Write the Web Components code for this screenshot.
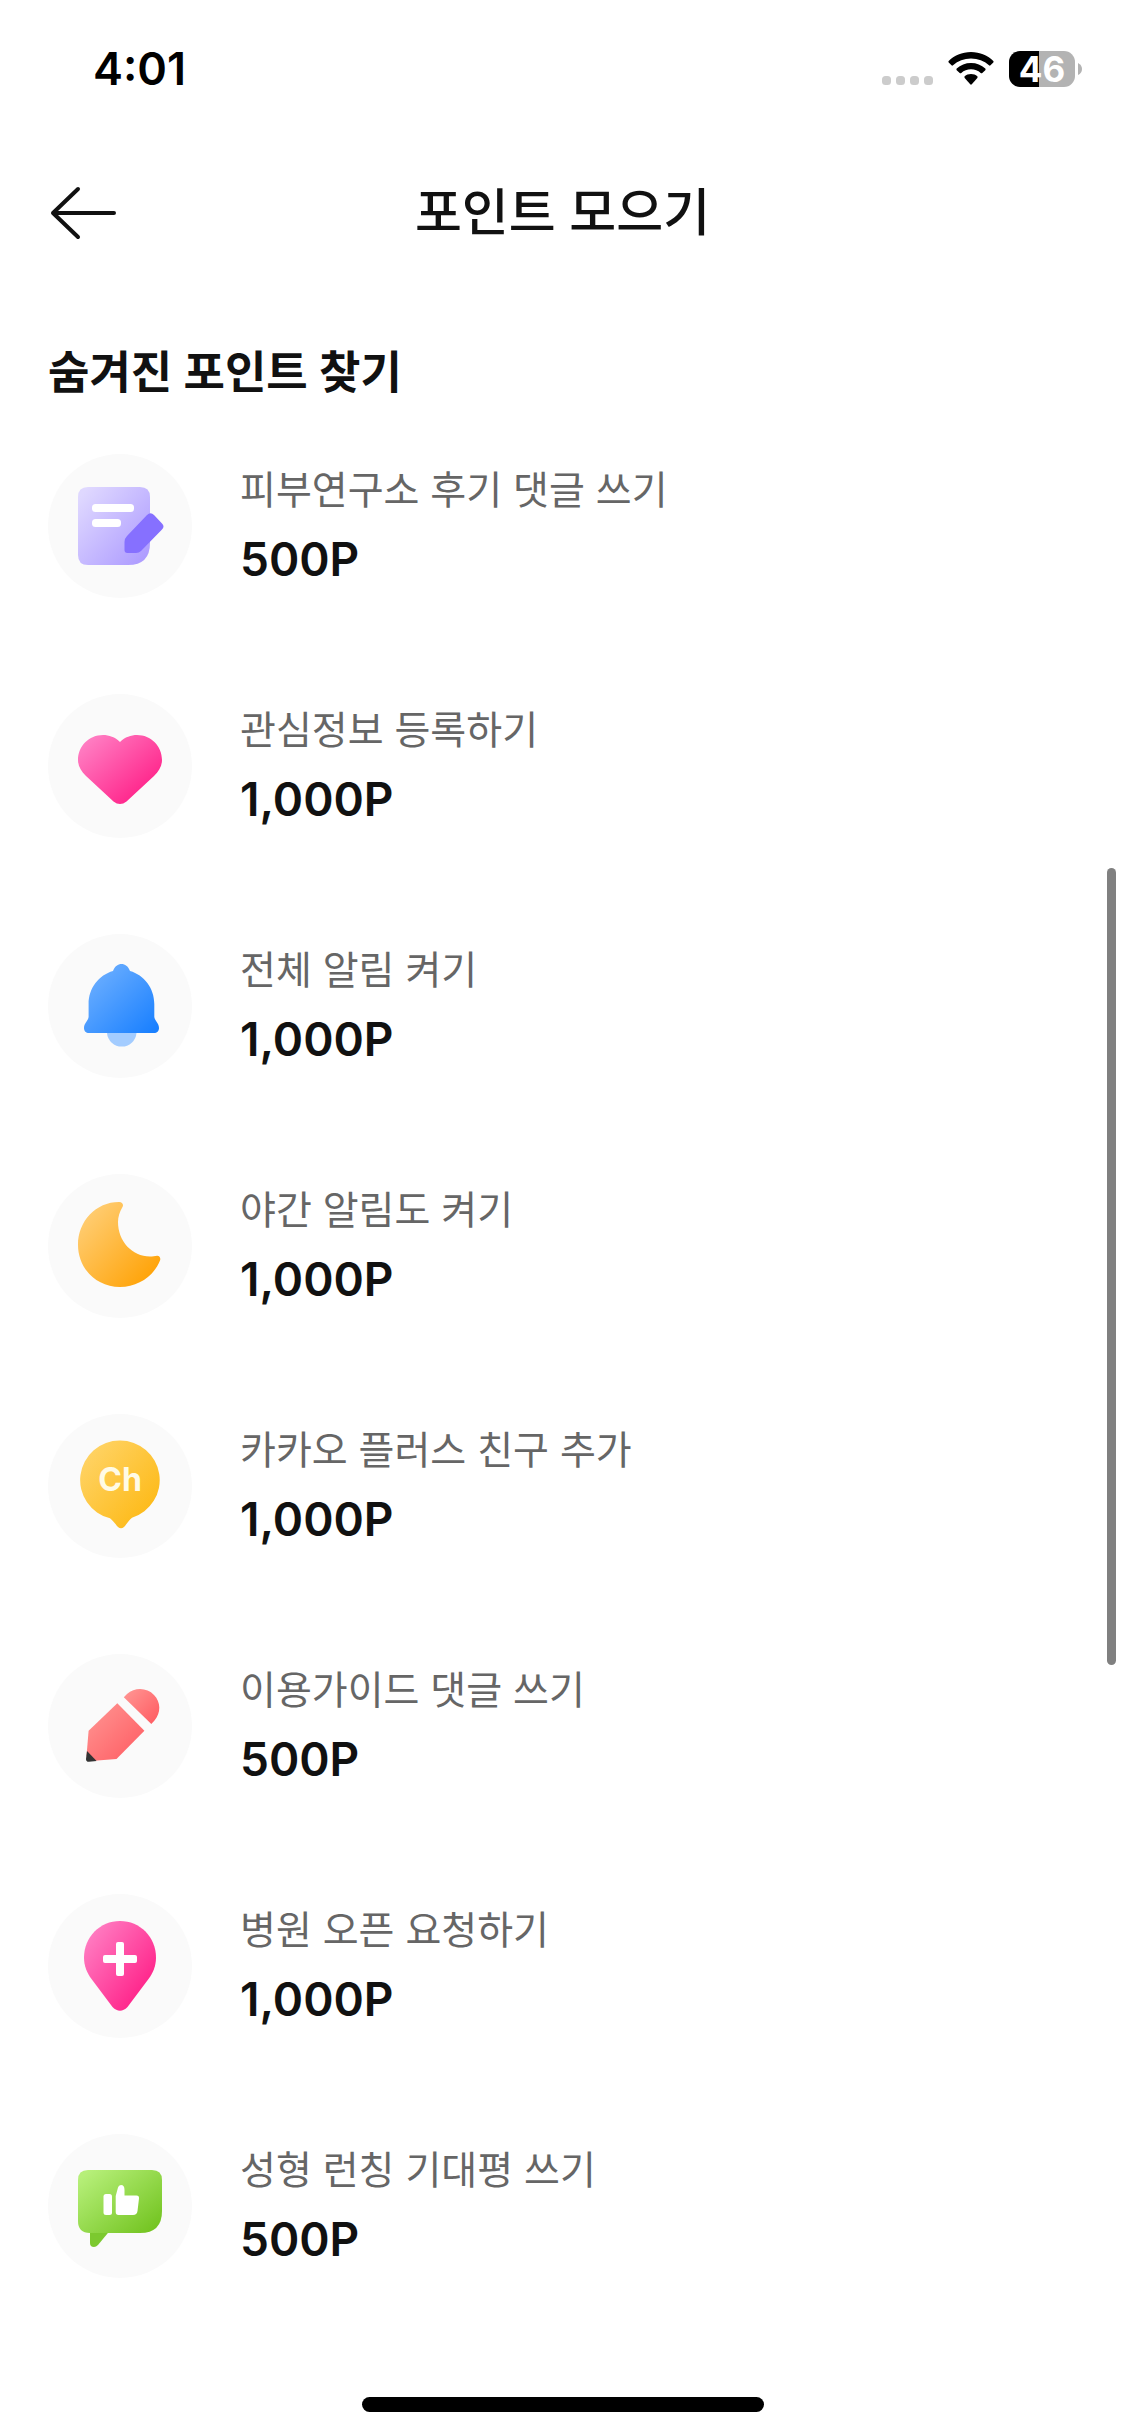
<!DOCTYPE html>
<html lang="ko">
<head>
<meta charset="utf-8">
<meta name="viewport" content="width=device-width, initial-scale=1">
<title>포인트 모으기</title>
<style>
  html, body { margin: 0; background: #fff; }
  body {
    color: #111;
    font-family: Inter, "Noto Sans CJK KR", sans-serif;
    min-height: 100vh;
  }
</style>
</head>
<body>
<points-screen></points-screen>

<script>
const define = (name, html, setup) => {
  const template = document.createElement('template');
  template.innerHTML = html;
  customElements.define(name, class extends HTMLElement {
    constructor() {
      super();
      this.attachShadow({ mode: 'open' }).append(template.content.cloneNode(true));
    }
    connectedCallback() { if (setup) setup(this, this.shadowRoot); }
  });
};

const gradient = (from, to) =>
  `<defs><linearGradient id="g" x1="0.05" y1="0.1" x2="0.95" y2="0.95"><stop offset="0" stop-color="${from}"/><stop offset="1" stop-color="${to}"/></linearGradient></defs>`;

const ICONS = {
  note: gradient('#dfd8ff', '#ad9bff') + `
    <path fill="url(#g)" d="M40 33H92Q102 33 102 43V89Q102 111 80 111H40Q30 111 30 101V43Q30 33 40 33Z"/>
    <rect x="44" y="50" width="42" height="8" rx="3.5" fill="#fff"/>
    <rect x="44" y="65" width="29" height="8" rx="3.5" fill="#fff"/>
    <path fill="#8670ff" d="M79 82L99 61Q102.500 57.500 106 61L114 69.500Q117 72.500 114 75.500L93 97Q91 99 88 99H79.500Q76.500 99 76.500 96V88Q76.500 84.500 79 82Z"/>`,
  heart: gradient('#ff80c4', '#ff1480') + `
    <path fill="url(#g)" d="M72 48C67 43 61 41 55 41C41 41 30 52 30 66C30 72 33 77 38 82L65.500 107.500Q72 112.500 78.500 107.500L106 82C111 77 114 72 114 66C114 52 103 41 89 41C83 41 77 43 72 48Z"/>`,
  bell: gradient('#70b1ff', '#1a80ff') + `
    <path fill="#a3ccff" d="M59 99H88.500A14.800 14.800 0 0 1 59 99Z"/>
    <path fill="url(#g)" d="M40.600 70C40.600 54 51 41 65 37C67 32 70 30 73.500 30C77 30 80 32 82 37C96 41 106.300 54 106.300 70V83C107 87 111 89 111 94C111 97 109 99 106 99H41C38 99 36 97 36 94C36 89 40 87 40.600 83Z"/>`,
  moon: gradient('#ffcf78', '#ffa000') + `
    <path fill="url(#g)" d="M71 28C74 27.800 76 30.500 74.500 33C71.500 38 70 43 70 48C70 67 84 82.500 102 82.500C104.500 82.500 107 82.300 109 81.800C111.500 81.500 113 84 112 86.500C106 102 90 113 72 113C48 113 30 94 30 71C30 47 48 28 71 28Z"/>`,
  channel: gradient('#ffd468', '#fdb70f') + `
    <path fill="url(#g)" d="M72 26.500A39.500 39.500 0 0 1 84 103.700C81 106 78 111 76 113Q73 115.500 70 113C68 111 65 106.500 62 104.300A39.500 39.500 0 0 1 72 26.500Z"/>
    <text x="72" y="77" text-anchor="middle" font-size="32" font-weight="700" fill="#fffbe6">Ch</text>`,
  pencil: gradient('#ff9391', '#ff5c62') + `
    <path fill="url(#g)" d="M75.800 43.300L79 40C87 33 99 33.500 106 41C113 48 113 59 106.500 66.500L103.300 70Z"/>
    <path fill="url(#g)" d="M69.300 49.300L96.400 76.700L68.500 105L43 107L38.500 102L40.600 76.700Z"/>
    <path fill="#333" d="M39 97L48.600 107L41 107.800Q38 108 38 105Z"/>`,
  pin: gradient('#ff80c4', '#ff1480') + `
    <path fill="url(#g)" d="M72 27C52 27 36 43 36 63.500C36 72 39 79 43.500 85L64.500 113Q72 120.500 79.500 113L100.500 85C105 79 108 72 108 63.500C108 43 92 27 72 27Z"/>
    <rect x="55" y="61" width="34" height="8" rx="2" fill="#fff"/>
    <rect x="68" y="48" width="8" height="34" rx="2" fill="#fff"/>`,
  review: gradient('#b6ef79', '#72c31f') + `
    <path fill="#7cc92f" d="M42 94H64L50 111Q48 113 46 113Q42 113 42 109Z"/>
    <path fill="url(#g)" d="M40 36H104Q114 36 114 46V77Q114 99 92 99H42Q30 99 30 87V46Q30 36 40 36Z"/>
    <rect x="55.500" y="60" width="8.500" height="21" rx="2.500" fill="#fff"/>
    <path fill="#fff" d="M67.700 62L70 53.500Q70.500 51 73 51Q76.500 51 76.500 56V61.500H88.500Q91.300 61.500 91 64.500L89.500 77Q89 81 85 81H70.500Q67.700 81 67.700 78Z"/>`
};

define('point-icon', `
  <style>
    :host { display: block; flex: none; width: 144px; height: 144px; border-radius: 50%; background: #fafafa; }
    svg { display: block; width: 100%; height: 100%; }
  </style>
  <svg viewBox="0 0 144 144" aria-hidden="true"></svg>
`, (host, root) => { root.querySelector('svg').innerHTML = ICONS[host.getAttribute('name')] || ''; });

define('status-bar', `
  <style>
    :host { display: flex; justify-content: space-between; align-items: center; height: 138px; padding: 0 43px 0 93px; box-sizing: border-box; color: #000; }
    time { font-size: 45px; line-height: 54px; font-weight: 600; }
    .system { display: flex; align-items: center; }
    svg { display: block; }
    .signal { margin-right: 15px; }
    .wifi { margin-right: 15px; }
    .level { width: 66px; height: 36px; border-radius: 11px; background: linear-gradient(90deg, #000 45%, #b3b3b3 45%); color: #fff; font-size: 35px; line-height: 36px; font-weight: 700; text-align: center; }
    .cap { margin-left: 3px; }
  </style>
  <time>4:01</time>
  <div class="system">
    <svg class="signal" width="51" height="36" viewBox="0 0 51 36" fill="#ccc" aria-hidden="true">
      <rect x="0" y="25" width="9" height="9" rx="3.500"/><rect x="14" y="25" width="9" height="9" rx="3.500"/><rect x="28" y="25" width="9" height="9" rx="3.500"/><rect x="42" y="25" width="9" height="9" rx="3.500"/>
    </svg>
    <svg class="wifi" width="46" height="36" viewBox="0 0 46 36" aria-hidden="true">
      <path d="M23 1C32 1 40 4.500 45.300 10Q46 10.800 45.300 11.600L42.500 14.300Q41.700 15 41 14.300C36 9.800 30 7.500 23 7.500S10 9.800 5 14.300Q4.300 15 3.500 14.300L0.700 11.600Q0 10.800 0.700 10C6 4.500 14 1 23 1Z"/>
      <path d="M23 12C28.500 12 33.500 14 37.300 17.600Q38 18.400 37.300 19.200L34.300 22Q33.500 22.700 32.700 22C30 19.600 26.800 18.300 23 18.300S16 19.600 13.300 22Q12.500 22.700 11.700 22L8.700 19.200Q8 18.400 8.700 17.600C12.500 14 17.500 12 23 12Z"/>
      <path d="M23 23C25.500 23 27.700 23.800 29.300 25.200Q30 26 29.300 26.900L23.800 33.300Q23 34.200 22.200 33.300L16.700 26.900Q16 26 16.700 25.200C18.300 23.800 20.500 23 23 23Z"/>
    </svg>
    <div class="level">46</div>
    <svg class="cap" width="4" height="12" viewBox="0 0 4 12" aria-hidden="true"><path d="M0 0Q4 2 4 6T0 12Z" fill="#b3b3b3"/></svg>
  </div>
`);

define('nav-bar', `
  <style>
    :host { display: grid; grid-template-columns: 1fr auto 1fr; align-items: center; height: 150px; padding: 0 48px; }
    button { justify-self: start; border: 0; padding: 0; background: none; color: #111; cursor: pointer; }
    svg { display: block; }
    h1 { margin: 0; font-size: 51px; line-height: 72px; font-weight: 500; }
  </style>
  <button type="button" aria-label="뒤로">
    <svg width="72" height="56" viewBox="0 0 72 56" fill="none" stroke="currentColor" stroke-width="4" stroke-linecap="round" stroke-linejoin="round" aria-hidden="true"><path d="M30 4L5 28L30 52M5 28H66"/></svg>
  </button>
  <h1><slot></slot></h1>
`);

define('point-item', `
  <style>
    :host { display: block; }
    a { display: flex; align-items: center; gap: 48px; color: inherit; text-decoration: none; }
    .text { display: flex; flex-direction: column; gap: 10px; min-width: 0; }
    .label { font-size: 39px; line-height: 56px; font-weight: 400; color: #666; }
    .points { font-size: 46px; line-height: 62px; font-weight: 600; color: #111; }
  </style>
  <a href="#">
    <point-icon></point-icon>
    <span class="text">
      <span class="label"><slot></slot></span>
      <span class="points"></span>
    </span>
  </a>
`, (host, root) => {
  const icon = root.querySelector('point-icon');
  icon.setAttribute('name', host.getAttribute('icon'));
  icon.shadowRoot.querySelector('svg').innerHTML = ICONS[host.getAttribute('icon')];
  root.querySelector('.points').textContent = host.getAttribute('points');
});

define('point-section', `
  <style>
    :host { display: block; padding: 52px 48px 158px; }
    h2 { margin: 0 0 48px; font-size: 45px; line-height: 66px; font-weight: 600; }
    .list { display: flex; flex-direction: column; gap: 96px; }
  </style>
  <h2><slot name="title"></slot></h2>
  <div class="list" role="list"><slot></slot></div>
`);

define('scroll-thumb', `
  <style>
    :host { display: block; position: fixed; right: 9px; top: 868px; width: 9px; height: 797px; border-radius: 5px; background: #808080; }
  </style>
`);

define('home-indicator', `
  <style>
    :host { display: flex; justify-content: center; position: fixed; left: 0; right: 0; bottom: 24px; pointer-events: none; }
    span { width: 402px; height: 15px; border-radius: 8px; background: #000; }
  </style>
  <span></span>
`);

define('points-screen', `
  <style>:host { display: block; }</style>
  <status-bar></status-bar>
  <nav-bar>포인트 모으기</nav-bar>
  <main>
    <point-section>
      <span slot="title">숨겨진 포인트 찾기</span>
      <point-item role="listitem" icon="note" points="500P">피부연구소 후기 댓글 쓰기</point-item>
      <point-item role="listitem" icon="heart" points="1,000P">관심정보 등록하기</point-item>
      <point-item role="listitem" icon="bell" points="1,000P">전체 알림 켜기</point-item>
      <point-item role="listitem" icon="moon" points="1,000P">야간 알림도 켜기</point-item>
      <point-item role="listitem" icon="channel" points="1,000P">카카오 플러스 친구 추가</point-item>
      <point-item role="listitem" icon="pencil" points="500P">이용가이드 댓글 쓰기</point-item>
      <point-item role="listitem" icon="pin" points="1,000P">병원 오픈 요청하기</point-item>
      <point-item role="listitem" icon="review" points="500P">성형 런칭 기대평 쓰기</point-item>
    </point-section>
  </main>
  <scroll-thumb></scroll-thumb>
  <home-indicator></home-indicator>
`);
</script>
</body>
</html>
